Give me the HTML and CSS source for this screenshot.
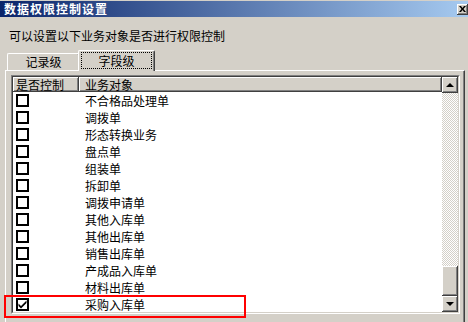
FILE: index.html
```html
<!DOCTYPE html>
<html lang="zh-CN">
<head>
    <meta charset="UTF-8">
    <title>数据权限控制设置</title>
    <link rel="stylesheet" href="styles.css">
</head>
<body>
    <div class="window">
        <div class="titlebar">
            <span class="title">数据权限控制设置</span>
            <span class="close-btn">
                <svg width="7" height="6" viewBox="0 0 7 6"><path d="M0 0h2l1.5 2L5 0h2L4.5 3 7 6H5L3.5 4 2 6H0l2.5-3z" fill="#000"/></svg>
            </span>
        </div>

        <div class="hint">可以设置以下业务对象是否进行权限控制</div>

        <div class="tabs">
            <div class="tab">记录级</div>
            <div class="tab active"><span class="focus">字段级</span></div>
        </div>

        <div class="panel">
            <div class="listview">
                <div class="listview-inner">
                    <div class="list">
                        <div class="header">
                            <div class="col-head col-check">是否控制</div>
                            <div class="col-head col-name">业务对象</div>
                        </div>
                        <div id="rows"></div>
                    </div>
                    <div class="scrollbar">
                        <div class="sb-btn"><span class="arrow up"></span></div>
                        <div class="sb-track"></div>
                        <div class="sb-thumb"></div>
                        <div class="sb-btn"><span class="arrow down"></span></div>
                    </div>
                </div>
            </div>
        </div>

        <!-- annotation box -->
        <div class="highlight"></div>
    </div>

    <script>
        const items = [
            { name: "不合格品处理单", checked: false },
            { name: "调拨单", checked: false },
            { name: "形态转换业务", checked: false },
            { name: "盘点单", checked: false },
            { name: "组装单", checked: false },
            { name: "拆卸单", checked: false },
            { name: "调拨申请单", checked: false },
            { name: "其他入库单", checked: false },
            { name: "其他出库单", checked: false },
            { name: "销售出库单", checked: false },
            { name: "产成品入库单", checked: false },
            { name: "材料出库单", checked: false },
            { name: "采购入库单", checked: true }
        ];

        const rowsEl = document.getElementById('rows');
        items.forEach(item => {
            const row = document.createElement('div');
            row.className = 'row';
            const tick = item.checked
                ? '<svg width="9" height="9" viewBox="0 0 9 9"><path d="M0.5 3.5l2.5 2.5 5.5-5.5v2.5L3 8.5 0.5 6z" fill="#000"/></svg>'
                : '';
            row.innerHTML = `
                <div class="cell col-check"><span class="checkbox">${tick}</span></div>
                <div class="cell col-name">${item.name}</div>
            `;
            rowsEl.appendChild(row);
        });
    </script>
</body>
</html>
```

FILE: styles.css
```css
body {
    margin: 0;
    padding: 0;
    background: #d4d0c8;
}

.window {
    position: relative;
    width: 468px;
    height: 322px;
    overflow: hidden;
    background: #d4d0c8;
    font-family: "Noto Sans CJK SC", "Liberation Sans", sans-serif;
    font-size: 12px;
    color: #000;
}

.titlebar {
    display: flex;
    align-items: center;
    height: 16px;
    margin-top: 1px;
    background: linear-gradient(to right, #0a246a, #a6caf0);
}

.title {
    padding-left: 4px;
    color: #fff;
    font-weight: bold;
    letter-spacing: 1px;
    line-height: 16px;
}

.close-btn {
    margin-left: auto;
    width: 11px;
    height: 11px;
    display: flex;
    align-items: center;
    justify-content: center;
    background: #d4d0c8;
    box-shadow: inset -1px -1px #404040, inset 1px 1px #fff, inset -2px -2px #808080;
}

.hint {
    margin: 11px 0 0 9px;
    line-height: 16px;
}

.tabs {
    display: flex;
    align-items: flex-end;
    height: 20px;
    margin-top: 6px;
    padding-left: 7px;
}

.tab {
    position: relative;
    width: 73px;
    height: 17px;
    line-height: 16px;
    text-align: center;
    background: #d4d0c8;
    border-left: 1px solid #fff;
    border-top: 1px solid #fff;
    border-right: 1px solid #404040;
    border-radius: 2px 2px 0 0;
    box-shadow: inset -1px 0 #808080;
    box-sizing: border-box;
}

.tab.active {
    z-index: 2;
    width: 77px;
    height: 21px;
    margin-left: -2px;
    margin-bottom: -1px;
    padding-top: 1px;
}

.focus {
    display: inline-block;
    width: 69px;
    line-height: 15px;
    border: 1px dotted #000;
}

.panel {
    position: relative;
    z-index: 1;
    width: 460px;
    height: 260px;
    margin-left: 5px;
    box-sizing: border-box;
    border-top: 1px solid #fff;
    border-left: 1px solid #fff;
    border-right: 1px solid #404040;
    box-shadow: inset -1px 0 #808080;
    padding: 4px 0 0 5px;
}

.listview {
    width: 449px;
    height: 239px;
    box-sizing: border-box;
    border: 1px solid;
    border-color: #808080 #fff #fff #808080;
}

.listview-inner {
    display: flex;
    height: 100%;
    box-sizing: border-box;
    border: 1px solid;
    border-color: #404040 #d4d0c8 #d4d0c8 #404040;
    background: #fff;
}

.list {
    flex: 1;
    overflow: hidden;
}

.header {
    display: flex;
    height: 15px;
}

.col-head {
    background: #d4d0c8;
    line-height: 15px;
    box-sizing: border-box;
    box-shadow: inset -1px -1px #404040, inset 1px 1px #fff, inset -2px -2px #808080;
}

.col-check {
    width: 66px;
    flex-shrink: 0;
    box-sizing: border-box;
    padding-left: 3px;
}

.col-name {
    flex: 1;
    padding-left: 6px;
}

.row {
    display: flex;
    height: 17px;
    align-items: center;
}

.cell {
    line-height: 17px;
}

.cell.col-check {
    display: flex;
    align-items: center;
}

.checkbox {
    width: 13px;
    height: 13px;
    box-sizing: border-box;
    border: 2px solid #000;
    background: #fff;
    display: flex;
    align-items: center;
    justify-content: center;
}

.scrollbar {
    width: 16px;
    display: flex;
    flex-direction: column;
}

.sb-btn, .sb-thumb {
    background: #d4d0c8;
    box-shadow: inset -1px -1px #404040, inset 1px 1px #fff, inset -2px -2px #808080;
}

.sb-btn {
    height: 16px;
    display: flex;
    align-items: center;
    justify-content: center;
}

.sb-thumb {
    height: 30px;
}

.sb-track {
    flex: 1;
    background-color: #fff;
    background-image: repeating-conic-gradient(#d4d0c8 0 25%, #fff 0 50%);
    background-size: 2px 2px;
}

.arrow {
    width: 0;
    height: 0;
    border-left: 4px solid transparent;
    border-right: 4px solid transparent;
}

.arrow.up {
    border-bottom: 4px solid #000;
}

.arrow.down {
    border-top: 4px solid #000;
}

.highlight {
    position: absolute;
    left: 4px;
    top: 295px;
    width: 242px;
    height: 23px;
    box-sizing: border-box;
    border: 2px solid #ff0000;
    z-index: 5;
}
```
